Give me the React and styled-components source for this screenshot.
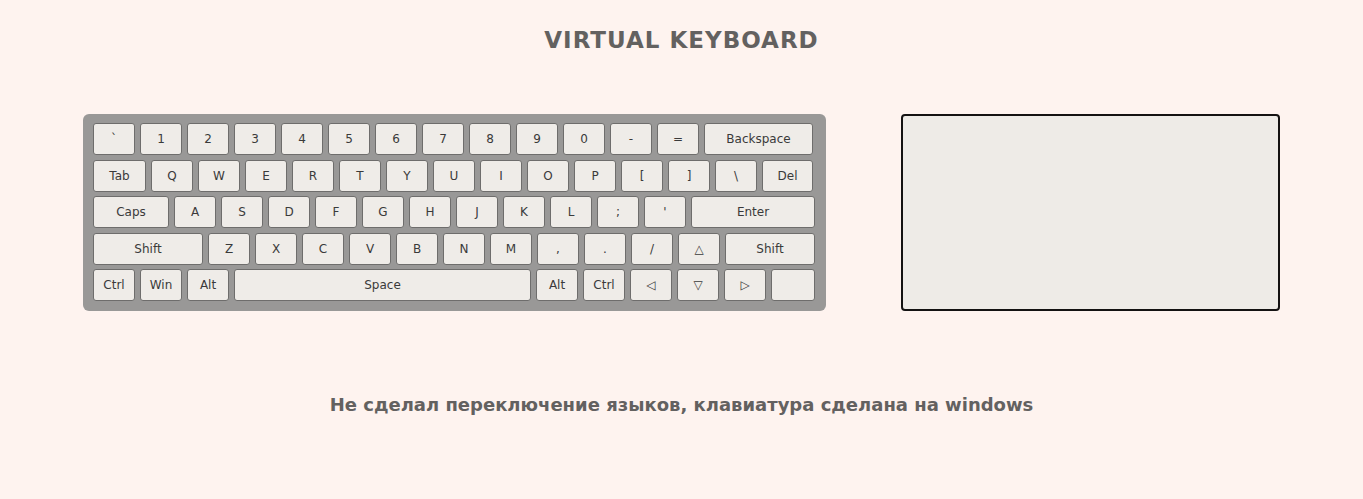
import React from 'react'
import styled, { createGlobalStyle } from 'styled-components'

const GlobalStyle = createGlobalStyle`
  html, body {
    margin: 0;
    padding: 0;
    background: #fef3ef;
    font-family: "DejaVu Sans", Verdana, sans-serif;
  }
`

const Page = styled.div`
  display: flex;
  flex-direction: column;
  align-items: center;
  padding-top: 25px;
`

const Title = styled.h1`
  margin: 0;
  font-size: 23px;
  line-height: 30px;
  letter-spacing: 1px;
  font-weight: bold;
  color: #636160;
`

const Main = styled.div`
  display: flex;
  gap: 75px;
  margin-top: 59px;
`

const Keyboard = styled.div`
  box-sizing: border-box;
  width: 743px;
  height: 197px;
  padding: 9px 10px 10px;
  background: #999897;
  border-radius: 6px;
  display: flex;
  flex-direction: column;
  gap: 4.5px;
`

const Row = styled.div`
  display: flex;
  gap: 5px;
`

const Key = styled.div`
  box-sizing: border-box;
  flex: none;
  width: ${p => p.$w || 42}px;
  height: 32px;
  display: flex;
  align-items: center;
  justify-content: center;
  background: #efece8;
  border: 1px solid #6e6d6c;
  border-radius: 3px;
  color: #3a3a3a;
  font-size: 12px;
`

const Screen = styled.div`
  box-sizing: border-box;
  width: 379px;
  height: 197px;
  background: #eeebe7;
  border: 2px solid #141212;
  border-radius: 4px;
`

const Note = styled.p`
  margin: 82px 0 0;
  font-size: 18px;
  line-height: 24px;
  font-weight: bold;
  color: #636160;
`

const rows = [
  [['`'], ['1'], ['2'], ['3'], ['4'], ['5'], ['6'], ['7'], ['8'], ['9'], ['0'], ['-'], ['='], ['Backspace', 109]],
  [['Tab', 53], ['Q'], ['W'], ['E'], ['R'], ['T'], ['Y'], ['U'], ['I'], ['O'], ['P'], ['['], [']'], ['\\'], ['Del', 51]],
  [['Caps', 76], ['A'], ['S'], ['D'], ['F'], ['G'], ['H'], ['J'], ['K'], ['L'], [';'], ["'"], ['Enter', 124]],
  [['Shift', 110], ['Z'], ['X'], ['C'], ['V'], ['B'], ['N'], ['M'], [','], ['.'], ['/'], ['△'], ['Shift', 90]],
  [['Ctrl'], ['Win'], ['Alt'], ['Space', 297], ['Alt'], ['Ctrl'], ['◁'], ['▽'], ['▷'], ['', 44]]
]

const App = () => (
  <Page>
    <GlobalStyle />
    <Title>VIRTUAL KEYBOARD</Title>
    <Main>
      <Keyboard>
        {rows.map((row, i) => (
          <Row key={i}>
            {row.map(([label, w], j) => (
              <Key key={j} $w={w}>{label}</Key>
            ))}
          </Row>
        ))}
      </Keyboard>
      <Screen />
    </Main>
    <Note>Не сделал переключение языков, клавиатура сделана на windows</Note>
  </Page>
)

export default App
